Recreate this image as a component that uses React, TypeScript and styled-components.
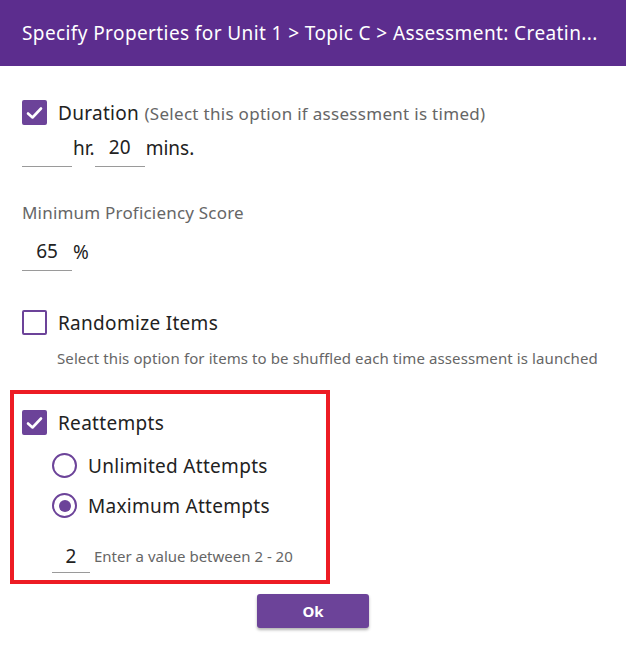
import React from "react";
import styled, { createGlobalStyle } from "styled-components";

const Global = createGlobalStyle`
  html, body { margin: 0; padding: 0; background: #fff; }
  body { font-family: "Noto Sans", "Open Sans", sans-serif; color: #222; }
  * { box-sizing: border-box; }
`;

const PURPLE = "#6c4399";

const Dialog = styled.div`
  width: 626px;
  height: 653px;
  background: #fff;
  display: flex;
  flex-direction: column;
`;

const Header = styled.div`
  height: 66px;
  background: #5c2d8e;
  color: #fff;
  display: flex;
  align-items: center;
  padding: 0 22px;
`;

const Title = styled.h1`
  margin: 0;
  font-size: 19px;
  letter-spacing: 0.4px;
  font-weight: 400;
  white-space: nowrap;
  overflow: hidden;
  text-overflow: ellipsis;
`;

const Body = styled.div`
  display: flex;
  flex-direction: column;
  padding: 34px 0 0 22px;
`;

const CheckRow = styled.label`
  display: flex;
  align-items: center;
  gap: 11px;
  height: 25px;
`;

const Box = styled.span<{ $checked?: boolean }>`
  width: 25px;
  height: 25px;
  border-radius: 2px;
  flex: none;
  display: flex;
  align-items: center;
  justify-content: center;
  background: ${(p) => (p.$checked ? PURPLE : "#fff")};
  border: 2px solid ${PURPLE};
`;

const Label = styled.span`
  font-size: 19px;
  letter-spacing: 0.3px;
  color: #222;
`;

const Hint = styled.span`
  font-size: 17px;
  letter-spacing: 0.3px;
  color: #666;
`;

const InputRow = styled.div<{ $top: number }>`
  display: flex;
  align-items: flex-end;
  margin-top: ${(p) => p.$top}px;
`;

const Field = styled.span<{ $w: number }>`
  width: ${(p) => p.$w}px;
  height: 36px;
  border-bottom: 1px solid #9a9a9a;
  display: flex;
  align-items: center;
  justify-content: center;
  font-size: 19px;
  color: #222;
  padding-bottom: 3px;
`;

const Unit = styled.span<{ $gap?: number }>`
  font-size: 19px;
  color: #222;
  height: 36px;
  display: flex;
  align-items: center;
  padding-bottom: 3px;
  margin: 0 ${(p) => p.$gap ?? 0}px 0 1px;
`;

const SectionLabel = styled.div`
  margin-top: 36px;
  font-size: 17px;
  letter-spacing: 0.2px;
  color: #666;
  line-height: 20px;
`;

const Description = styled.div`
  margin: 13px 0 0 35px;
  font-size: 15px;
  letter-spacing: 0.1px;
  line-height: 20px;
  color: #666;
`;

const Highlight = styled.div`
  margin: 22px 0 0 -12px;
  width: 320px;
  height: 194px;
  border: 4px solid #ed1c24;
  padding: 16px 0 0 8px;
  display: flex;
  flex-direction: column;
`;

const RadioGroup = styled.div`
  display: flex;
  flex-direction: column;
  gap: 15px;
  margin: 18px 0 0 30px;
`;

const RadioRow = styled.label`
  display: flex;
  align-items: center;
  gap: 11px;
  height: 25px;
`;

const Circle = styled.span<{ $on?: boolean }>`
  width: 25px;
  height: 25px;
  border-radius: 50%;
  border: 2px solid ${PURPLE};
  display: flex;
  align-items: center;
  justify-content: center;
  flex: none;
  &::after {
    content: "";
    width: 12px;
    height: 12px;
    border-radius: 50%;
    background: ${(p) => (p.$on ? PURPLE : "transparent")};
  }
`;

const AttemptRow = styled.div`
  display: flex;
  align-items: flex-end;
  margin: 25px 0 0 30px;
`;

const SmallField = styled(Field)`
  height: 30px;
  padding-bottom: 4px;
`;

const SmallHint = styled.span`
  font-size: 15px;
  color: #666;
  margin-left: 4px;
  height: 30px;
  display: flex;
  align-items: center;
  padding-bottom: 4px;
`;

const Footer = styled.div`
  display: flex;
  justify-content: center;
  padding-top: 10px;
  margin-left: -22px;
`;

const OkButton = styled.button`
  width: 112px;
  height: 34px;
  border: none;
  border-radius: 3px;
  background: ${PURPLE};
  color: #fff;
  font-family: inherit;
  font-weight: 700;
  font-size: 15px;
  box-shadow: 0 2px 3px rgba(0, 0, 0, 0.3);
  cursor: pointer;
`;

const Spacer = styled.div<{ $h: number }>`
  height: ${(p) => p.$h}px;
`;

const Check = () => (
  <svg width="17" height="14" viewBox="0 0 17 14">
    <path d="M2 7.5 L6.5 11.5 L15 2.5" fill="none" stroke="#fff" strokeWidth="2.6" strokeLinecap="round" strokeLinejoin="round" />
  </svg>
);

export default function App() {
  return (
    <Dialog>
      <Global />
      <Header>
        <Title>Specify Properties for Unit 1 &gt; Topic C &gt; Assessment: Creatin...</Title>
      </Header>
      <Body>
        <CheckRow>
          <Box $checked><Check /></Box>
          <Label>
            Duration <Hint>(Select this option if assessment is timed)</Hint>
          </Label>
        </CheckRow>
        <InputRow $top={6}>
          <Field $w={50} />
          <Unit $gap={0}>hr.</Unit>
          <Field $w={50}>20</Field>
          <Unit>mins.</Unit>
        </InputRow>
        <SectionLabel>Minimum Proficiency Score</SectionLabel>
        <InputRow $top={12}>
          <Field $w={50}>65</Field>
          <Unit>%</Unit>
        </InputRow>
        <Spacer $h={39} />
        <CheckRow>
          <Box />
          <Label>Randomize Items</Label>
        </CheckRow>
        <Description>Select this option for items to be shuffled each time assessment is launched</Description>
        <Highlight>
          <CheckRow>
            <Box $checked><Check /></Box>
            <Label>Reattempts</Label>
          </CheckRow>
          <RadioGroup>
            <RadioRow>
              <Circle />
              <Label>Unlimited Attempts</Label>
            </RadioRow>
            <RadioRow>
              <Circle $on />
              <Label>Maximum Attempts</Label>
            </RadioRow>
          </RadioGroup>
          <AttemptRow>
            <SmallField $w={38}>2</SmallField>
            <SmallHint>Enter a value between 2 - 20</SmallHint>
          </AttemptRow>
        </Highlight>
        <Footer>
          <OkButton>Ok</OkButton>
        </Footer>
      </Body>
    </Dialog>
  );
}
